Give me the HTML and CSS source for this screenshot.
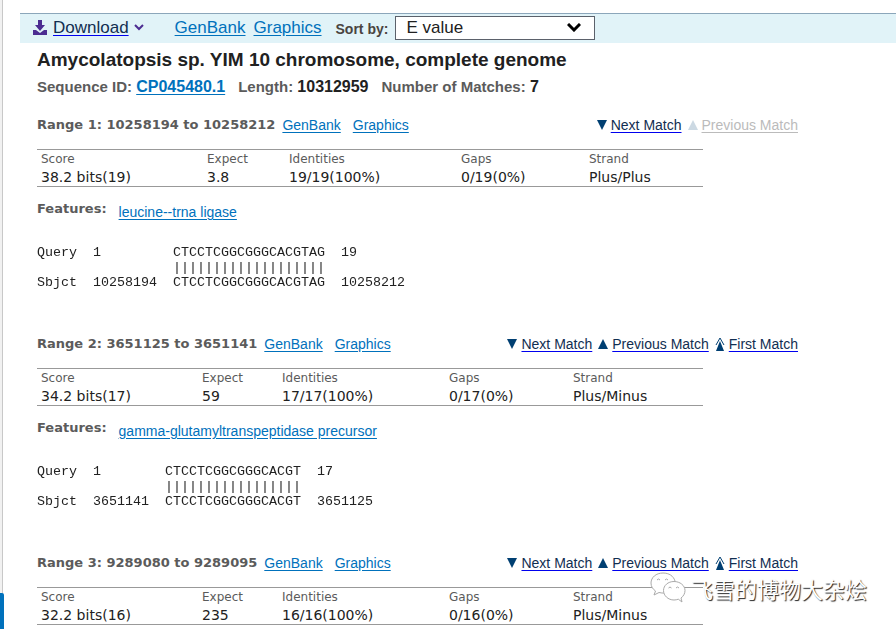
FILE: index.html
```html
<!DOCTYPE html>
<html lang="en">
<head>
<meta charset="utf-8">
<title>BLAST alignments</title>
<link rel="stylesheet" href="styles.css">
</head>
<body>
<svg class="defs" aria-hidden="true">
  <symbol id="down" viewBox="0 0 10 10"><path d="M0 0H10L5 10Z"/></symbol>
  <symbol id="up" viewBox="0 0 10 10"><path d="M5 0L10 10H0Z"/></symbol>
  <symbol id="first" viewBox="0 0 10 14"><path d="M5 4L9 14H1Z"/><path d="M1 8L5 1L9 8" fill="none" stroke="currentColor" stroke-width="1"/></symbol>
</svg>
<div class="page">
  <div class="rail"><span class="rail-thumb"></span></div>
  <main>
    <div class="toolbar">
      <svg class="dl-icon" viewBox="0 0 16 16" aria-hidden="true"><path d="M6 0h4v5h3L8 11 3 5h3z"/><path d="M1 10h3l4 3 4-3h3v5H1z"/></svg>
      <a class="download" href="#">Download</a>
      <svg class="caret" viewBox="0 0 10 7" aria-hidden="true"><path d="M1 1l4 4 4-4"/></svg>
      <a class="tool" href="#">GenBank</a>
      <a class="tool" href="#">Graphics</a>
      <label for="sort">Sort by:</label>
      <span class="select"><select id="sort"><option>E value</option></select><svg viewBox="0 0 14 9" aria-hidden="true"><path d="M1 1l6 6 6-6"/></svg></span>
    </div>
    <div class="content">
      <h1>Amycolatopsis sp. YIM 10 chromosome, complete genome</h1>
      <p class="meta"><span>Sequence ID: <a href="#">CP045480.1</a></span><span>Length: <b>10312959</b></span><span>Number of Matches: <b>7</b></span></p>

      <section>
        <header>
          <h2>Range 1: 10258194 to 10258212</h2><a href="#">GenBank</a><a href="#">Graphics</a>
          <nav><span><svg class="tri"><use href="#down"/></svg><a href="#">Next Match</a></span><span class="off"><svg class="tri"><use href="#up"/></svg><a href="#">Previous Match</a></span></nav>
        </header>
        <table class="wide">
          <thead><tr><th>Score</th><th>Expect</th><th>Identities</th><th>Gaps</th><th>Strand</th></tr></thead>
          <tbody><tr><td>38.2 bits(19)</td><td>3.8</td><td>19/19(100%)</td><td>0/19(0%)</td><td>Plus/Plus</td></tr></tbody>
        </table>
        <div class="features"><h3>Features:</h3><a href="#">leucine--trna ligase</a></div>
<pre>Query  1         CTCCTCGGCGGGCACGTAG  19
                 |||||||||||||||||||
Sbjct  10258194  CTCCTCGGCGGGCACGTAG  10258212</pre>
      </section>

      <section>
        <header>
          <h2>Range 2: 3651125 to 3651141</h2><a href="#">GenBank</a><a href="#">Graphics</a>
          <nav><span><svg class="tri"><use href="#down"/></svg><a href="#">Next Match</a></span><span><svg class="tri"><use href="#up"/></svg><a href="#">Previous Match</a></span><span><svg class="first"><use href="#first"/></svg><a href="#">First Match</a></span></nav>
        </header>
        <table>
          <thead><tr><th>Score</th><th>Expect</th><th>Identities</th><th>Gaps</th><th>Strand</th></tr></thead>
          <tbody><tr><td>34.2 bits(17)</td><td>59</td><td>17/17(100%)</td><td>0/17(0%)</td><td>Plus/Minus</td></tr></tbody>
        </table>
        <div class="features"><h3>Features:</h3><a href="#">gamma-glutamyltranspeptidase precursor</a></div>
<pre>Query  1        CTCCTCGGCGGGCACGT  17
                |||||||||||||||||
Sbjct  3651141  CTCCTCGGCGGGCACGT  3651125</pre>
      </section>

      <section>
        <header>
          <h2>Range 3: 9289080 to 9289095</h2><a href="#">GenBank</a><a href="#">Graphics</a>
          <nav><span><svg class="tri"><use href="#down"/></svg><a href="#">Next Match</a></span><span><svg class="tri"><use href="#up"/></svg><a href="#">Previous Match</a></span><span><svg class="first"><use href="#first"/></svg><a href="#">First Match</a></span></nav>
        </header>
        <table>
          <thead><tr><th>Score</th><th>Expect</th><th>Identities</th><th>Gaps</th><th>Strand</th></tr></thead>
          <tbody><tr><td>32.2 bits(16)</td><td>235</td><td>16/16(100%)</td><td>0/16(0%)</td><td>Plus/Minus</td></tr></tbody>
        </table>
      </section>
    </div>
  </main>
</div>
<div class="watermark">
  <svg viewBox="0 0 36 32" aria-hidden="true">
    <path d="M25 9C23.500 4 19 1 13 1C6 1 1 5.500 1 11c0 3.500 1.700 6 4.500 8L4 23l5-2.500c2 .5 4 .7 5.500.5"/>
    <path d="M24 9.500c-6 0-10.500 4-10.500 9s4.500 9.500 10.500 9.500c1.500 0 3-.3 4.300-.8L32 30l-1-4c2.500-1.800 4-4.500 4-7.500 0-5-5-9-11-9z"/>
    <path d="M7 8q1.500-2 3 0M15 8q1.500-2 3 0M18.500 16q1.500-2 3 0M26 16q1.500-2 3 0"/>
  </svg>
  <span>飞雪的博物大杂烩</span>
</div>
</body>
</html>
```
FILE: styles.css
```css
* { box-sizing: border-box; }
body { margin: 0; background: #fff; color: #212121; font: 14px/20px "Liberation Sans", Arial, sans-serif; }
a { color: #0071bc; text-underline-offset: 2px; }
h1, h2, h3, p, pre { margin: 0; }
.defs { position: absolute; width: 0; height: 0; }
.page { display: flex; height: 100vh; overflow: hidden; }
.rail { flex: none; display: flex; align-items: flex-end; width: 4px; margin-right: 16px; background: linear-gradient(to right, #f1f1f1 2px, #c8c8c8 2px 3px, #fff 3px); }
.rail-thumb { width: 4px; height: 36px; background: #0071bc; border-top-right-radius: 2px; }
main { flex: 1; min-width: 0; padding-top: 13px; }

.toolbar { display: flex; align-items: center; height: 30px; padding: 0 0 2px 12px; background: #e1f3f8; border-top: 1px solid #8ba6ba; font-size: 17px; }
.dl-icon { width: 16px; height: 16px; margin-right: 5px; fill: #4c2c92; }
.download { color: #112e51; text-decoration-color: #0000ee; }
.caret { width: 10px; height: 7px; margin: 0 31px 0 5px; fill: none; stroke: #4c2c92; stroke-width: 2; }
.tool { margin-right: 8px; }
.toolbar label { margin: 2px 7px 0 6px; color: #494440; font-size: 14px; font-weight: bold; }
.select { display: flex; align-items: center; width: 200px; height: 24px; background: #fff; border: 1px solid #5b616b; }
.select select { flex: 1; height: 22px; margin: 0; padding: 0 0 0 10px; border: 0; background: transparent; appearance: none; color: #212121; font: 17px/22px "Liberation Sans", Arial, sans-serif; }
.select svg { width: 14px; height: 9px; margin-right: 13px; fill: none; stroke: #000; stroke-width: 3; pointer-events: none; }

.content { padding-left: 17px; }
h1 { margin-top: 4px; font-size: 19px; line-height: 26px; }
.meta { display: flex; gap: 13px; margin-top: 4px; color: #5b5b5b; font-size: 15px; font-weight: bold; line-height: 20px; }
.meta a, .meta b { font-size: 16px; }
.meta b { color: #212121; }

section { margin-top: 44px; }
.meta + section { margin-top: 18px; }
header { display: flex; align-items: center; width: 761px; max-width: 100%; height: 20px; }
h2, h3 { color: #5b5b5b; font: bold 13px/18px "DejaVu Sans", Verdana, sans-serif; }
h2 { margin-right: 7px; }
header > a { margin-right: 12px; }
nav { display: flex; gap: 6px; margin-left: auto; }
nav span { display: flex; align-items: center; }
nav a { color: #112e51; text-decoration-color: #0000ee; }
nav svg { margin-right: 4px; fill: #003f72; color: #003f72; }
.tri { width: 10px; height: 10px; }
.first { width: 10px; height: 14px; }
.off svg { fill: #ccd9e3; }
.off a { color: #bbb; text-decoration-color: #bbb; }

table { width: 666px; max-width: 100%; margin-top: 14px; border-collapse: collapse; table-layout: fixed; border: solid #999; border-width: 1px 0; font-family: "DejaVu Sans", Verdana, sans-serif; }
th, td { padding: 0 0 0 4px; text-align: left; font-weight: normal; }
th { color: #5b5b5b; font-size: 12px; line-height: 18px; }
td { font-size: 14px; line-height: 18px; }
th:nth-child(1) { width: 161px; }
th:nth-child(2) { width: 80px; }
th:nth-child(3) { width: 167px; }
th:nth-child(4) { width: 124px; }
.wide th:nth-child(1) { width: 166px; }
.wide th:nth-child(2) { width: 82px; }
.wide th:nth-child(3) { width: 172px; }
.wide th:nth-child(4) { width: 128px; }

.features { display: flex; gap: 12px; margin-top: 13px; }
.features a { margin-top: 2px; }
pre { margin-top: 23px; font: 10pt/15px "Liberation Mono", "Courier New", monospace; will-change: opacity; }

.watermark { position: absolute; right: 29px; bottom: 25px; display: flex; align-items: center; gap: 5px; color: #fff; font: 22px/28px "Noto Sans CJK SC", sans-serif; text-shadow: 1px 1px 1px #222; }
.watermark svg { width: 36px; height: 32px; fill: #fff; stroke: #aaa; stroke-width: 1; }
```
